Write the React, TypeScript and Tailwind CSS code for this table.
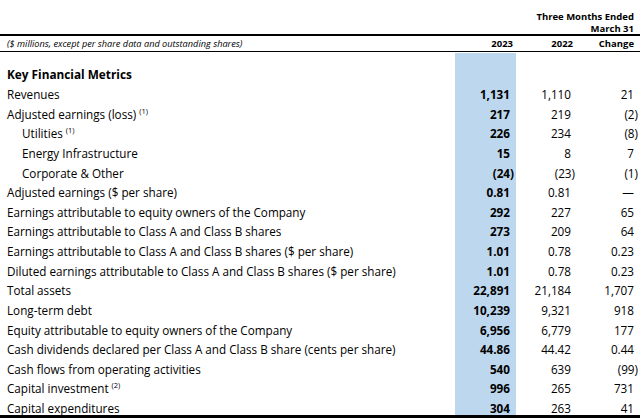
import React from "react";

type Row = {
  label: string;
  sup?: string;
  indent?: boolean;
  a: string;
  b: string;
  c: string;
};

const rows: Row[] = [
  { label: "Revenues", a: "1,131", b: "1,110", c: "21" },
  { label: "Adjusted earnings (loss)", sup: "(1)", a: "217", b: "219", c: "(2)" },
  { label: "Utilities", sup: "(1)", indent: true, a: "226", b: "234", c: "(8)" },
  { label: "Energy Infrastructure", indent: true, a: "15", b: "8", c: "7" },
  { label: "Corporate & Other", indent: true, a: "(24)", b: "(23)", c: "(1)" },
  { label: "Adjusted earnings ($ per share)", a: "0.81", b: "0.81", c: "—" },
  { label: "Earnings attributable to equity owners of the Company", a: "292", b: "227", c: "65" },
  { label: "Earnings attributable to Class A and Class B shares", a: "273", b: "209", c: "64" },
  { label: "Earnings attributable to Class A and Class B shares ($ per share)", a: "1.01", b: "0.78", c: "0.23" },
  { label: "Diluted earnings attributable to Class A and Class B shares ($ per share)", a: "1.01", b: "0.78", c: "0.23" },
  { label: "Total assets", a: "22,891", b: "21,184", c: "1,707" },
  { label: "Long-term debt", a: "10,239", b: "9,321", c: "918" },
  { label: "Equity attributable to equity owners of the Company", a: "6,956", b: "6,779", c: "177" },
  { label: "Cash dividends declared per Class A and Class B share (cents per share)", a: "44.86", b: "44.42", c: "0.44" },
  { label: "Cash flows from operating activities", a: "540", b: "639", c: "(99)" },
  { label: "Capital investment", sup: "(2)", a: "996", b: "265", c: "731" },
  { label: "Capital expenditures", a: "304", b: "263", c: "41" },
];

const isParen = (v: string) => v.endsWith(")");

export default function App() {
  return (
    <div
      className="w-[640px] h-[419px] overflow-hidden bg-white text-black"
      style={{ fontFamily: '"Open Sans", "Liberation Sans", sans-serif' }}
    >
      {/* Title */}
      <div className="h-[34px] pt-[11px] pr-[6px] flex flex-col items-end text-[9.5px] font-bold leading-[11.5px]">
        <div>Three Months Ended</div>
        <div>March 31</div>
      </div>

      {/* Column header */}
      <div className="flex h-[18px] border-t-2 border-b border-black items-center">
        <div className="flex-1 pl-[7px] text-[9.2px] italic leading-[15px]">
          ($ millions, except per share data and outstanding shares)
        </div>
        <div className="w-[61px] text-right pr-[3px] text-[9.5px] font-bold leading-[15px]">2023</div>
        <div className="w-[62px] text-right pr-[5px] text-[9.5px] font-bold leading-[15px]">2022</div>
        <div className="w-[62px] text-right pr-[6px] text-[9.5px] font-bold leading-[15px]">Change</div>
      </div>

      <div className="h-[1px]" />

      {/* Spacer with highlight */}
      <div className="flex h-[12.4px]">
        <div className="flex-1" />
        <div className="w-[61px] bg-[#bdd7ee]" />
        <div className="w-[124px]" />
      </div>

      {/* Section title */}
      <div className="flex h-[19.625px] items-start leading-[19.625px]">
        <div className="flex-1 pl-[7px] text-[11.8px] font-bold">Key Financial Metrics</div>
        <div className="w-[61px] h-full bg-[#bdd7ee]" />
        <div className="w-[124px]" />
      </div>

      {rows.map((r, i) => {
        const last = i === rows.length - 1;
        return (
          <div
            key={i}
            className={`flex items-start leading-[19.625px] text-[11.7px] ${last ? "h-[16.4px]" : "h-[19.625px]"}`}
          >
            <div className={`flex-1 whitespace-nowrap ${r.indent ? "pl-[22px]" : "pl-[7px]"}`}>
              {r.label}
              {r.sup && (
                <span className="ml-[3px] text-[7.5px] relative top-[-5px] align-baseline leading-none">{r.sup}</span>
              )}
            </div>
            <div
              className={`w-[61px] h-full bg-[#bdd7ee] text-right font-bold ${isParen(r.a) ? "pr-[2px]" : "pr-[6px]"}`}
            >
              {r.a}
            </div>
            <div className={`w-[62px] h-full text-right ${isParen(r.b) ? "pr-[3px]" : "pr-[7px]"}`}>{r.b}</div>
            <div className={`w-[62px] h-full text-right ${isParen(r.c) ? "pr-[2px]" : "pr-[6px]"}`}>{r.c}</div>
          </div>
        );
      })}

      <div className="h-[3px] bg-black" />
    </div>
  );
}
